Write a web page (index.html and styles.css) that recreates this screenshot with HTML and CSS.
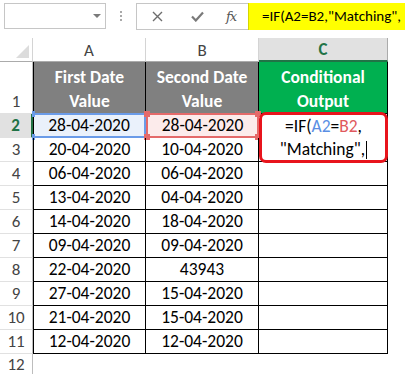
FILE: index.html
```html
<!DOCTYPE html>
<html lang="en">
  <head>
    <meta charset="UTF-8" />
    <title>Conditional Output</title>
    <link rel="stylesheet" href="styles.css">
  </head>
  <body>
    <div class="formula-bar">
      <div class="name-box"><span class="caret"></span></div>
      <div class="grip"><i></i><i></i><i></i></div>
      <div class="fx-buttons">
        <svg width="11" height="11" viewBox="0 0 11 11"><path d="M1 1L10 10M10 1L1 10" stroke="#6d6d6d" stroke-width="1.4" fill="none"/></svg>
        <svg width="13" height="11" viewBox="0 0 13 11"><path d="M1 5.5L4.8 9.5L12 1.5" stroke="#7a7a7a" stroke-width="2.2" fill="none"/></svg>
        <span class="fx">fx</span>
      </div>
      <div class="formula-input">=IF(A2=B2,"Matching",</div>
    </div>

    <div class="sheet">
      <div class="hd corner"><span class="tri"></span></div>
      <div class="hd">A</div>
      <div class="hd">B</div>
      <div class="hd active">C</div>
      <div class="hd rest"></div>

      <div class="rn top">1</div>
      <div class="cell title first">First Date<br>Value</div>
      <div class="cell title">Second Date<br>Value</div>
      <div class="cell title green">Conditional<br>Output</div>
      <div class="rest"></div>

      <div class="rn active">2</div>
      <div class="cell first ref-a">28-04-2020<b class="dot tl"></b><b class="dot bl"></b></div>
      <div class="cell ref-b">28-04-2020<b class="dot tl"></b><b class="dot bl"></b><b class="dot tr"></b><b class="dot br"></b></div>
      <div class="cell edit-host">
        <div class="editor">
          <div>=IF(<span class="blue">A2</span>=<span class="red">B2</span>,</div>
          <div>"Matching",<span class="cursor"></span></div>
        </div>
      </div>
      <div class="rest"></div>

      <div class="rn">3</div>
      <div class="cell first">20-04-2020</div>
      <div class="cell">10-04-2020</div>
      <div class="cell"></div>
      <div class="rest"></div>

      <div class="rn">4</div>
      <div class="cell first">06-04-2020</div>
      <div class="cell">06-04-2020</div>
      <div class="cell"></div>
      <div class="rest"></div>

      <div class="rn">5</div>
      <div class="cell first">13-04-2020</div>
      <div class="cell">04-04-2020</div>
      <div class="cell"></div>
      <div class="rest"></div>

      <div class="rn">6</div>
      <div class="cell first">14-04-2020</div>
      <div class="cell">18-04-2020</div>
      <div class="cell"></div>
      <div class="rest"></div>

      <div class="rn">7</div>
      <div class="cell first">09-04-2020</div>
      <div class="cell">09-04-2020</div>
      <div class="cell"></div>
      <div class="rest"></div>

      <div class="rn">8</div>
      <div class="cell first">22-04-2020</div>
      <div class="cell">43943</div>
      <div class="cell"></div>
      <div class="rest"></div>

      <div class="rn">9</div>
      <div class="cell first">27-04-2020</div>
      <div class="cell">15-04-2020</div>
      <div class="cell"></div>
      <div class="rest"></div>

      <div class="rn">10</div>
      <div class="cell first">21-04-2020</div>
      <div class="cell">15-04-2020</div>
      <div class="cell"></div>
      <div class="rest"></div>

      <div class="rn">11</div>
      <div class="cell first">12-04-2020</div>
      <div class="cell">12-04-2020</div>
      <div class="cell"></div>
      <div class="rest"></div>

      <div class="rn last">12</div>
      <div class="blank"></div>
      <div class="blank"></div>
      <div class="blank"></div>
      <div class="blank"></div>
    </div>
  </body>
</html>
```

FILE: styles.css
```css
body {
  margin: 0;
  width: 408px;
  height: 374px;
  overflow: hidden;
  background-color: white;
  font-family: "Carlito", "Lato", sans-serif;
  font-size: 17.5px;
  color: black;
}

.formula-bar {
  display: flex;
  align-items: flex-start;
  height: 38px;
  padding-top: 3px;
  box-sizing: border-box;
}

.name-box {
  width: 102px;
  height: 26px;
  margin-left: 4px;
  border: 1px solid #c6c6c6;
  box-sizing: border-box;
  position: relative;
}

.caret {
  position: absolute;
  left: 88px;
  top: 10px;
  border-left: 4px solid transparent;
  border-right: 4px solid transparent;
  border-top: 4px solid #7a7a7a;
}

.grip {
  width: 30px;
  display: flex;
  flex-direction: column;
  align-items: center;
  gap: 2px;
  padding-top: 8px;
}

.grip i {
  width: 2px;
  height: 2px;
  background-color: #a9a9a9;
}

.fx-buttons {
  width: 112px;
  height: 27px;
  border: 1px solid #c6c6c6;
  border-right: none;
  box-sizing: border-box;
  display: flex;
  align-items: center;
  padding-left: 15px;
  gap: 28px;
}

.fx {
  font-family: "DejaVu Serif", serif;
  font-style: italic;
  font-size: 13px;
  color: #555;
  letter-spacing: -1px;
  margin-left: -6px;
}

.formula-input {
  width: 157px;
  height: 27px;
  background-color: #ffff00;
  border-left: 1px solid #d6d600;
  box-sizing: border-box;
  padding-left: 13px;
  font-size: 15px;
  line-height: 27px;
  white-space: nowrap;
  overflow: hidden;
}

.sheet {
  display: grid;
  grid-template-columns: 33px 113px 113px 129px 20px;
  grid-template-rows: 24px 52px repeat(10, 24px) 22px;
}

.sheet > div {
  box-sizing: border-box;
}

.hd {
  display: flex;
  align-items: center;
  justify-content: center;
  color: #444;
  font-size: 17px;
  border-right: 1px solid #d4d4d4;
  border-bottom: 1px solid #ababab;
  padding-top: 1px;
}

.hd.corner {
  position: relative;
}

.tri {
  position: absolute;
  right: 3px;
  bottom: 3px;
  border-left: 13px solid transparent;
  border-bottom: 13px solid #dcdcdc;
}

.hd.active {
  background-color: #e1e1e1;
  color: #217346;
  font-weight: bold;
  border-bottom: 2px solid #217346;
  border-right: 1px solid #ababab;
}

.hd.rest {
  border-right: none;
}

.rn {
  display: flex;
  align-items: flex-end;
  justify-content: center;
  color: #444;
  font-size: 17px;
  border-right: 1px solid #bdbdbd;
  border-bottom: 1px solid #e1e1e1;
  padding-bottom: 1px;
}

.rn.active {
  background-color: #e1e1e1;
  color: #217346;
  font-weight: bold;
  border-right: 2px solid #217346;
}

.rn.last {
  border-bottom: none;
}

.cell {
  position: relative;
  display: flex;
  align-items: flex-end;
  justify-content: center;
  border-right: 1px solid black;
  border-bottom: 1px solid black;
  padding-bottom: 1px;
  line-height: 22px;
  white-space: nowrap;
}

.cell.first {
  border-left: 1px solid black;
}

.title {
  background-color: #808080;
  color: white;
  font-weight: bold;
  text-align: center;
  line-height: 24px;
  padding-bottom: 0;
}

.title.green {
  background-color: #00b050;
}

.ref-a {
  background-color: #eaf1fb;
  border: 2px solid #6a9be8;
  margin-top: -1px;
  padding-bottom: 0;
}

.ref-b {
  background-color: #fcebeb;
  border: 2px solid #e46a6a;
  margin-top: -1px;
  padding-bottom: 0;
}

.dot {
  position: absolute;
  width: 6px;
  height: 6px;
}

.ref-a .dot {
  background-color: #6a9be8;
}

.ref-b .dot {
  background-color: #e46a6a;
}

.dot.tl { left: -4px; top: -4px; }
.dot.bl { left: -4px; bottom: -4px; }
.dot.tr { right: -4px; top: -4px; }
.dot.br { right: -4px; bottom: -4px; }

.ref-a .dot.tl,
.ref-a .dot.bl {
  width: 3px;
  left: -2px;
}

.edit-host {
  overflow: visible;
}

.editor {
  position: absolute;
  left: 0;
  top: -2px;
  width: 129px;
  height: 51px;
  box-sizing: border-box;
  background-color: white;
  border: 3px solid #e8141c;
  border-radius: 7px;
  text-align: center;
  line-height: 23px;
  z-index: 2;
}

.blue {
  color: #5b8fe4;
}

.red {
  color: #e0595e;
}

.cursor {
  display: inline-block;
  width: 1px;
  height: 18px;
  background-color: black;
  vertical-align: -4px;
  margin-left: 1px;
}

.rest,
.blank {
  border: none;
}
```
